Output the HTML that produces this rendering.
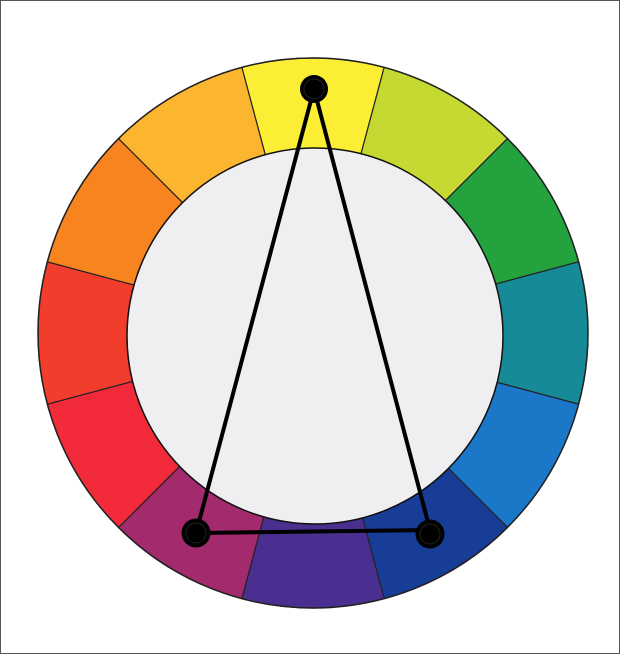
<!DOCTYPE html>
<html><head><meta charset="utf-8"><style>
html,body{margin:0;padding:0;background:#fff}
.f{position:absolute;left:0;top:0;width:618px;height:652px;border:1px solid #555;background:#fff}
svg{position:absolute;left:0;top:0}
</style></head><body>
<div class="f"></div>
<svg width="620" height="654" viewBox="0 0 620 654">
<defs>
<path id="s" d="M -71.2 -265.6 A 275 275 0 0 1 71.2 -265.6 L 44 -164.2 A 170 170 0 0 0 -44 -164.2 Z" stroke="#222" stroke-width="1.2"/>
</defs>
<g transform="translate(313,333)">
<use href="#s" fill="#fbee34" transform="rotate(0)"/>
<use href="#s" fill="#c6d933" transform="rotate(30)"/>
<use href="#s" fill="#24a23e" transform="rotate(60)"/>
<use href="#s" fill="#178a97" transform="rotate(90)"/>
<use href="#s" fill="#1b78c9" transform="rotate(120)"/>
<use href="#s" fill="#183d96" transform="rotate(150)"/>
<use href="#s" fill="#4b2f90" transform="rotate(180)"/>
<use href="#s" fill="#a22a6d" transform="rotate(210)"/>
<use href="#s" fill="#f22a3a" transform="rotate(240)"/>
<use href="#s" fill="#f23c2c" transform="rotate(270)"/>
<use href="#s" fill="#f7841f" transform="rotate(300)"/>
<use href="#s" fill="#fcb52f" transform="rotate(330)"/>
<circle r="275" fill="none" stroke="#222" stroke-width="1.5"/>
<circle cx="2" cy="3" r="188" fill="#efeff1" stroke="#111" stroke-width="1.5"/>
</g>
<g stroke="#000" stroke-width="4" fill="none" stroke-linecap="round">
<path d="M314 89 L196 533 L430 530 Z"/>
</g>
<g fill="#000">
<circle cx="314" cy="89" r="14"/>
<circle cx="196" cy="533" r="14.5"/>
<circle cx="430" cy="534" r="14.5"/>
</g>
<g fill="none" stroke="#222" stroke-width="1">
<circle cx="314" cy="89" r="10"/>
<circle cx="196" cy="533" r="10"/>
<circle cx="430" cy="534" r="10"/>
</g>
</svg>
</body></html>
